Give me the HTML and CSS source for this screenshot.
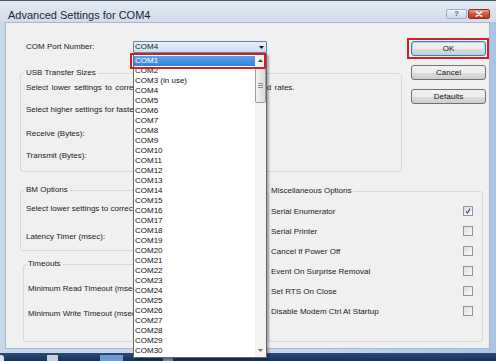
FILE: index.html
```html
<!DOCTYPE html>
<html>
<head>
<meta charset="utf-8">
<title>Advanced Settings for COM4</title>
<link rel="stylesheet" href="styles.css">
</head>
<body>
<div class="screen">
  <div class="window">
    <div class="titlebar">
      <span class="title">Advanced Settings for COM4</span>
      <div class="caption-btns">
        <span class="cbtn help">?</span>
        <span class="cbtn close">
          <svg width="8" height="6" viewBox="0 0 8 6"><path d="M1.5 0.8 L6.5 5.2 M6.5 0.8 L1.5 5.2" stroke="#fff" stroke-width="1.6" stroke-linecap="round"/></svg>
        </span>
      </div>
    </div>
    <div class="client">
      <div class="top">
        <div class="main">
          <div class="port-row">
            <span class="port-label">COM Port Number:</span>
            <div class="combo-wrap">
              <div class="combo">
                <span>COM4</span>
                <svg class="combo-arrow" width="5" height="3" viewBox="0 0 5 3"><path d="M0 0 H5 L2.5 3 Z" fill="#111"/></svg>
              </div>
              <div class="dropdown">
                <div class="items">
                  <div class="item sel">COM1</div>
                  <div class="item">COM2</div>
                  <div class="item">COM3 (in use)</div>
                  <div class="item">COM4</div>
                  <div class="item">COM5</div>
                  <div class="item">COM6</div>
                  <div class="item">COM7</div>
                  <div class="item">COM8</div>
                  <div class="item">COM9</div>
                  <div class="item">COM10</div>
                  <div class="item">COM11</div>
                  <div class="item">COM12</div>
                  <div class="item">COM13</div>
                  <div class="item">COM14</div>
                  <div class="item">COM15</div>
                  <div class="item">COM16</div>
                  <div class="item">COM17</div>
                  <div class="item">COM18</div>
                  <div class="item">COM19</div>
                  <div class="item">COM20</div>
                  <div class="item">COM21</div>
                  <div class="item">COM22</div>
                  <div class="item">COM23</div>
                  <div class="item">COM24</div>
                  <div class="item">COM25</div>
                  <div class="item">COM26</div>
                  <div class="item">COM27</div>
                  <div class="item">COM28</div>
                  <div class="item">COM29</div>
                  <div class="item">COM30</div>
                </div>
                <div class="scrollbar">
                  <div class="sb-btn">
                    <svg width="5" height="3" viewBox="0 0 5 3"><path d="M0 3 H5 L2.5 0 Z" fill="#444"/></svg>
                  </div>
                  <div class="sb-thumb">
                    <svg width="5" height="5" viewBox="0 0 5 5"><path d="M0 0.5 H5 M0 2.5 H5 M0 4.5 H5" stroke="#8a8a8a" stroke-width="1"/></svg>
                  </div>
                  <div class="sb-track"></div>
                  <div class="sb-btn">
                    <svg width="5" height="3" viewBox="0 0 5 3"><path d="M0 0 H5 L2.5 3 Z" fill="#777"/></svg>
                  </div>
                </div>
                <div class="annot-item"></div>
              </div>
            </div>
          </div>

          <fieldset class="group usb">
            <legend>USB Transfer Sizes</legend>
            <div class="row wide">Select lower settings to correct performance problems at low baud rates.</div>
            <div class="row">Select higher settings for faster performance.</div>
            <div class="row gap2">Receive (Bytes):</div>
            <div class="row">Transmit (Bytes):</div>
          </fieldset>
        </div>

        <div class="buttons">
          <button class="btn ok">OK</button>
          <button class="btn">Cancel</button>
          <button class="btn">Defaults</button>
        </div>
      </div>

      <div class="bottom">
        <div class="left-col">
          <fieldset class="group bm">
            <legend>BM Options</legend>
            <div class="row">Select lower settings to correct response problems.</div>
            <div class="row gap6">Latency Timer (msec):</div>
          </fieldset>
          <fieldset class="group timeouts">
            <legend>Timeouts</legend>
            <div class="row">Minimum Read Timeout (msec):</div>
            <div class="row gap3">Minimum Write Timeout (msec):</div>
          </fieldset>
        </div>

        <fieldset class="group misc">
          <legend>Miscellaneous Options</legend>
          <div class="opt"><span>Serial Enumerator</span>
            <span class="check"><svg width="8" height="8" viewBox="0 0 8 8"><path d="M2 4.4 L3.4 6 L6.2 1.6" stroke="#34568c" stroke-width="1.1" fill="none"/></svg></span>
          </div>
          <div class="opt"><span>Serial Printer</span><span class="check"></span></div>
          <div class="opt"><span>Cancel If Power Off</span><span class="check"></span></div>
          <div class="opt"><span>Event On Surprise Removal</span><span class="check"></span></div>
          <div class="opt"><span>Set RTS On Close</span><span class="check"></span></div>
          <div class="opt"><span>Disable Modem Ctrl At Startup</span><span class="check"></span></div>
        </fieldset>
      </div>
    </div>
  </div>
  <div class="taskbar">
    <span class="tb tb-orb"></span>
    <span class="tb tb-a"></span>
    <span class="tb tb-b"></span>
    <span class="tb tb-c"></span>
  </div>
</div>
</body>
</html>
```

FILE: styles.css
```css
* { box-sizing: border-box; }

html, body {
  margin: 0;
  padding: 0;
}

body {
  font-family: "Liberation Sans", Arial, sans-serif;
  font-size: 8px;
  color: #1b1b1b;
  background: #1c385e;
}

.screen {
  width: 496px;
  height: 361px;
  overflow: hidden;
  background: #1c385e;
}

.window {
  height: 353px;
  display: flex;
  flex-direction: column;
  border-top: 1px solid #44556c;
  background: linear-gradient(to right, #c6d7ea 0, #c9d9ec 60%, #a9c5e6 100%);
}

/* ---------- title bar ---------- */
.titlebar {
  height: 21px;
  flex: none;
  display: flex;
  align-items: flex-start;
  padding: 0 6px 0 8px;
  background: linear-gradient(to bottom, #e1e8f1, #d3deeb);
}

.title {
  font-size: 11px;
  line-height: 12px;
  margin-top: 8px;
  color: #1d2633;
}

.caption-btns {
  margin-left: auto;
  margin-top: 8px;
  display: flex;
  gap: 1px;
}

.cbtn {
  height: 10px;
  border-radius: 2px;
  display: flex;
  align-items: center;
  justify-content: center;
}

.help {
  width: 21px;
  border: 1px solid #9aaec5;
  background: linear-gradient(to bottom, #f1f5f9, #dbe5ef 50%, #cbd8e6);
  color: #4a6a94;
  font-size: 8px;
  font-weight: bold;
  line-height: 8px;
}

.close {
  width: 22px;
  border: 1px solid #8b3325;
  background: linear-gradient(to bottom, #e8a090, #d2553f 50%, #c23c28);
}

/* ---------- client area ---------- */
.client {
  flex: none;
  height: 327px;
  margin: 0 6px 4px 5px;
  border: 1px solid #a7b8cd;
  background: #f0f0f0;
  padding: 18px 3px 0 14px;
  display: flex;
  flex-direction: column;
}

.top {
  display: flex;
}

.main {
  width: 382px;
}

.port-row {
  display: flex;
  align-items: center;
  height: 12px;
}

.port-label {
  width: 113px;
  padding-left: 6px;
  line-height: 12px;
}

.combo-wrap {
  position: relative;
  width: 134px;
  height: 12px;
}

.combo {
  height: 12px;
  border: 1px solid #5f86b0;
  border-radius: 1px;
  background: linear-gradient(to bottom, #eaf2fa, #cadcf0);
  display: flex;
  align-items: center;
  padding-left: 1px;
  line-height: 10px;
}

.combo-arrow {
  margin-left: auto;
  margin-right: 2px;
}

/* dropdown list (open, lies over the dialog) */
.dropdown {
  position: absolute;
  left: 0;
  top: 12px;
  width: 134px;
  height: 305px;
  z-index: 10;
  border: 1px solid #666;
  background: #fff;
  box-shadow: 2px 2px 2px rgba(0, 0, 0, 0.3);
  display: flex;
}

.items {
  flex: 1;
  padding-top: 2px;
}

.item {
  height: 10px;
  line-height: 10px;
  padding-left: 1px;
  white-space: nowrap;
  color: #111;
}

.item.sel {
  background: linear-gradient(to bottom, #5aa2ec, #3483da);
  color: #fff;
}

.scrollbar {
  width: 11px;
  display: flex;
  flex-direction: column;
  background: #f3f3f3;
}

.sb-btn {
  height: 13px;
  display: flex;
  align-items: center;
  justify-content: center;
}

.sb-thumb {
  height: 35px;
  margin: 1px 0 0 0;
  border: 1px solid #9c9c9c;
  border-radius: 2px;
  background: linear-gradient(to right, #f4f4f4, #dadada);
  display: flex;
  align-items: center;
  justify-content: center;
}

.sb-track {
  flex: 1;
}

.annot-item {
  position: absolute;
  left: -4px;
  top: -1px;
  width: 136px;
  height: 16px;
  border: 2px solid #d11f2a;
}

/* ---------- group boxes ---------- */
.group {
  margin: 0;
  min-width: 0;
  border: 1px solid #d3d8de;
  border-radius: 3px;
}

.group legend {
  font-size: 8px;
  line-height: 8px;
  padding: 0 2px;
  margin-left: -2px;
}

.row {
  height: 22px;
  line-height: 22px;
  white-space: nowrap;
}

.row.wide {
  word-spacing: 1.2px;
}

.row.gap2 { margin-top: 2px; }
.row.gap3 { margin-top: 3px; }
.row.gap6 { margin-top: 6px; }

.usb {
  margin-top: 16px;
  width: 382px;
  padding: 0 5px 4px 5px;
}

.bottom {
  display: flex;
  align-items: flex-start;
  margin-top: 14px;
}

.left-col {
  width: 244px;
}

.bm {
  width: 244px;
  padding: 4px 5px 2px 5px;
}

.timeouts {
  width: 240px;
  margin: 9px 0 0 3px;
  padding: 10px 4px 16px 4px;
}

.misc {
  width: 215px;
  margin: 1px 0 0 4px;
  padding: 6px 9px 20px 2px;
}

.opt {
  height: 20px;
  display: flex;
  align-items: center;
  justify-content: space-between;
  white-space: nowrap;
}

.check {
  width: 10px;
  height: 10px;
  border: 1px solid #959595;
  background: linear-gradient(135deg, #dcdcdc, #fbfbfb);
  display: flex;
  align-items: center;
  justify-content: center;
}

/* ---------- buttons ---------- */
.buttons {
  width: 75px;
  margin-left: 9px;
  display: flex;
  flex-direction: column;
  gap: 9px;
}

.btn {
  height: 15px;
  margin: 0;
  padding: 0;
  font: inherit;
  font-size: 8px;
  color: #111;
  border: 1px solid #707070;
  border-radius: 3px;
  background: linear-gradient(to bottom, #f2f2f2 0, #ebebeb 50%, #dcdcdc 51%, #cfcfcf 100%);
}

.btn.ok {
  position: relative;
  border-color: #3c7fb1;
  box-shadow: inset 0 0 0 1px #9fdcf3;
}

/* red annotation frame drawn over the default button */
.btn.ok::after {
  content: "";
  position: absolute;
  left: -5px;
  top: -4px;
  right: -4px;
  bottom: -4px;
  border: 2px solid #d11f2a;
}

/* ---------- taskbar ---------- */
.taskbar {
  height: 8px;
  display: flex;
  align-items: flex-end;
  background: linear-gradient(to bottom, #2b4b78, #17325a);
}

.tb {
  height: 6px;
  display: block;
}

.tb-orb {
  width: 4px;
  background: #d8e3ee;
  border-radius: 0 3px 0 0;
}

.tb-a {
  width: 11px;
  margin-left: 43px;
  background: #c9d2dc;
}

.tb-b {
  width: 23px;
  margin-left: 42px;
  background: #6f9bcf;
}

.tb-c {
  width: 10px;
  margin-left: 40px;
  background: #8894a3;
}
```
